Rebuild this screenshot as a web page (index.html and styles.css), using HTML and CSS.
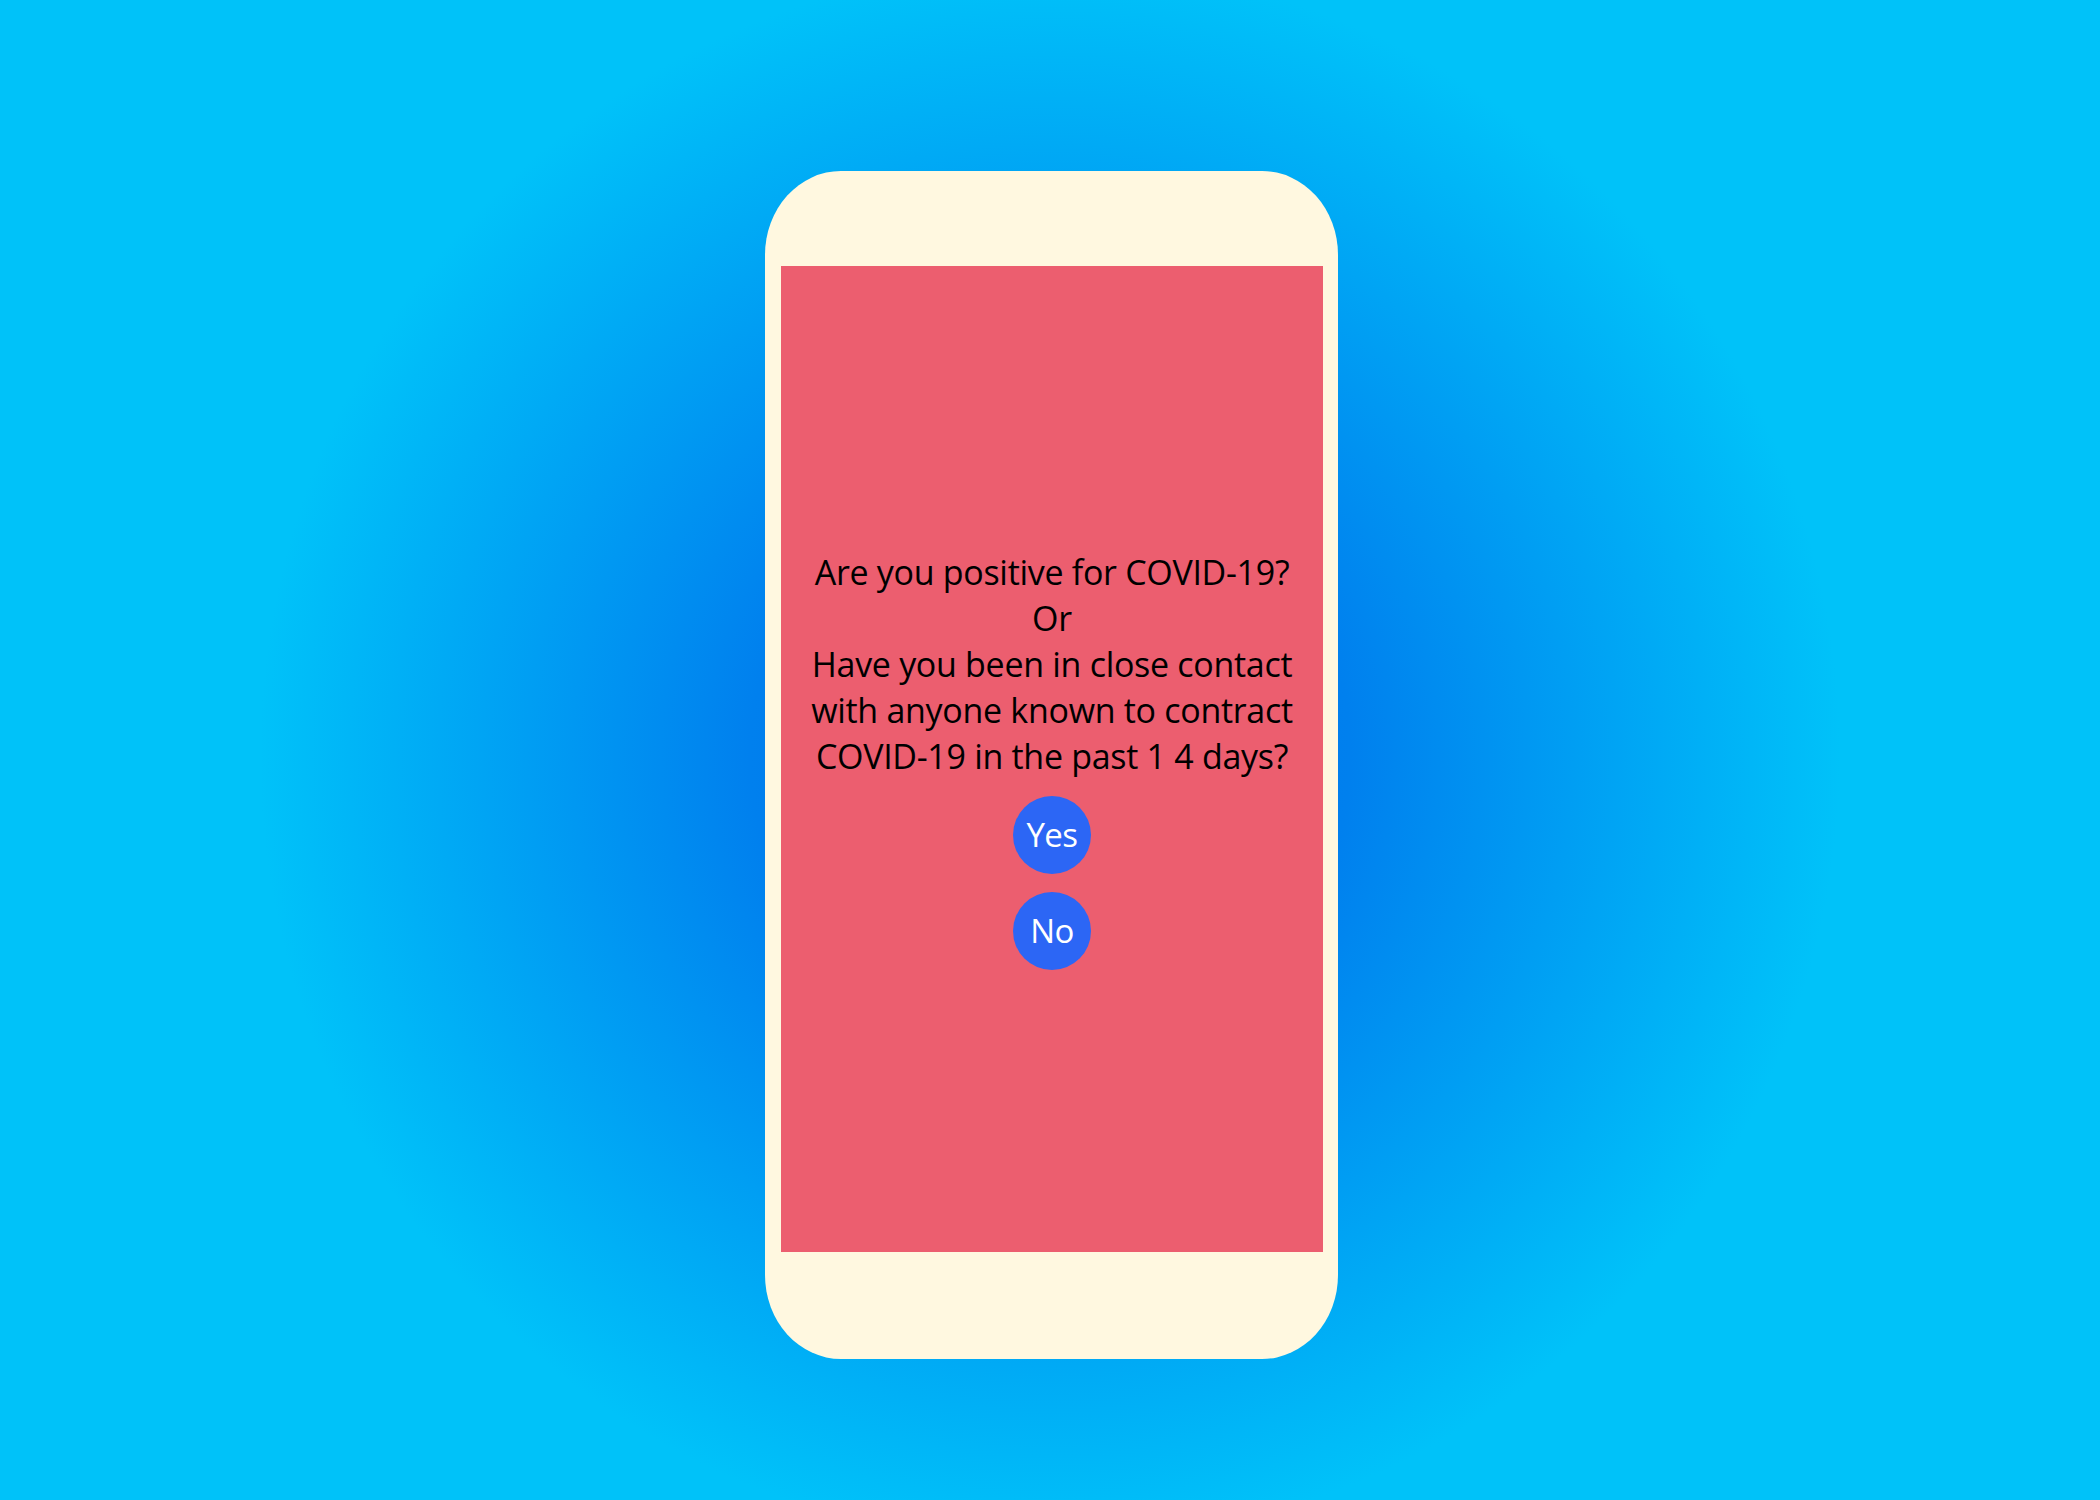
FILE: index.html
```html
<!DOCTYPE html>
<html>
<head>
<meta charset="utf-8">
<link rel="stylesheet" href="styles.css">
</head>
<body>
<div class="stage">
  <div class="phone">
    <div class="screen">
      <p class="question">Are you positive for COVID-19?<br>Or<br>Have you been in close contact<br>with anyone known to contract<br>COVID-19 in the past 1 4 days?</p>
      <button class="answer">Yes</button>
      <button class="answer">No</button>
    </div>
  </div>
</div>
</body>
</html>
```
FILE: styles.css
```css
html, body {
  margin: 0;
  padding: 0;
}
body {
  width: 2100px;
  height: 1500px;
  background: radial-gradient(circle 790px at 1050px 755px, #006fe9 0%, #0080ee 38%, #00c2f9 100%);
  background-color: #00c2f9;
  font-family: "Open Sans", "Noto Sans", sans-serif;
}
.stage {
  display: flex;
  justify-content: center;
  padding: 171px 0 0 3px;
}
.phone {
  width: 573px;
  height: 1188px;
  box-sizing: border-box;
  padding: 95px 15px 107px 16px;
  background: #fff8e0;
  border-radius: 76px / 84px;
  display: flex;
}
.screen {
  flex: 1;
  background: #ec5e6f;
  display: flex;
  flex-direction: column;
  align-items: center;
  justify-content: center;
}
.question {
  margin: 0 0 17px;
  text-align: center;
  font-size: 34px;
  line-height: 46px;
  color: #000;
  letter-spacing: -0.3px;
}
.answer {
  width: 78px;
  height: 78px;
  border-radius: 50%;
  border: none;
  background: #2c66f5;
  color: #fff;
  font-family: "Open Sans", "Noto Sans", sans-serif;
  font-size: 33px;
  padding: 0;
  margin: 0 0 18px;
  letter-spacing: -0.5px;
}
.answer:last-child {
  margin-bottom: 0;
}
```
